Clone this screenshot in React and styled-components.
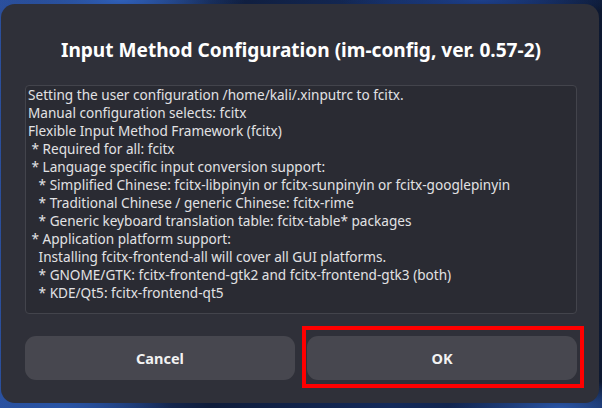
import React from "react";
import styled, { createGlobalStyle } from "styled-components";

const GlobalStyle = createGlobalStyle`
  html, body {
    margin: 0;
    padding: 0;
    width: 602px;
    height: 408px;
    overflow: hidden;
  }
`;

const Screen = styled.div`
  position: relative;
  width: 602px;
  height: 408px;
  box-sizing: border-box;
  padding: 4px 3px 5px 1px;
  display: flex;
  background:
    radial-gradient(ellipse 180px 40px at 120px 0px, #2f5fb8 0%, rgba(47, 95, 184, 0) 70%),
    radial-gradient(ellipse 200px 30px at 480px 0px, #1d3f8a 0%, rgba(29, 63, 138, 0) 70%),
    radial-gradient(ellipse 160px 40px at 60px 408px, #2a56a8 0%, rgba(42, 86, 168, 0) 70%),
    radial-gradient(ellipse 160px 40px at 560px 408px, #2a55a6 0%, rgba(42, 85, 166, 0) 70%),
    linear-gradient(90deg, #2b4f9c 0%, #0f1c3a 35%, #142a5a 65%, #0d1830 100%);
`;

const Dialog = styled.div`
  flex: 1;
  display: flex;
  flex-direction: column;
  background: #2f3039;
  border-radius: 14px;
  padding: 0 22px 23px 24px;
  font-family: "Noto Sans", "Open Sans", sans-serif;
`;

const Header = styled.div`
  height: 81px;
  box-sizing: border-box;
  padding-top: 34px;
  text-align: center;
`;

const Title = styled.h1`
  margin: 0;
  font-size: 19.1px;
  line-height: 24px;
  font-weight: 700;
  color: #ffffff;
  white-space: nowrap;
`;

const LogBox = styled.pre`
  margin: 0;
  height: 229px;
  box-sizing: border-box;
  padding: 0 2px;
  background: #2a2b33;
  border: 1px solid #43444c;
  border-radius: 4px;
  color: #e2e2e4;
  font-family: "Noto Sans", "Open Sans", sans-serif;
  font-size: 13.6px;
  line-height: 18px;
  white-space: pre;
  overflow: hidden;
`;

const Actions = styled.div`
  margin-top: 22px;
  display: grid;
  grid-template-columns: 1fr 1fr;
  gap: 12px;
`;

const Button = styled.button`
  position: relative;
  height: 44px;
  border: none;
  border-radius: 11px;
  background: #47474f;
  color: #f2f2f2;
  font-family: "Noto Sans", "Open Sans", sans-serif;
  font-size: 14.5px;
  font-weight: 700;
  cursor: pointer;
`;

const Highlight = styled.span`
  position: absolute;
  left: -5px;
  right: -7px;
  top: -10px;
  bottom: -8px;
  border: 4px solid #ff0000;
  pointer-events: none;
`;

const lines = [
  "Setting the user configuration /home/kali/.xinputrc to fcitx.",
  "Manual configuration selects: fcitx",
  "Flexible Input Method Framework (fcitx)",
  " * Required for all: fcitx",
  " * Language specific input conversion support:",
  "   * Simplified Chinese: fcitx-libpinyin or fcitx-sunpinyin or fcitx-googlepinyin",
  "   * Traditional Chinese / generic Chinese: fcitx-rime",
  "   * Generic keyboard translation table: fcitx-table* packages",
  " * Application platform support:",
  "   Installing fcitx-frontend-all will cover all GUI platforms.",
  "   * GNOME/GTK: fcitx-frontend-gtk2 and fcitx-frontend-gtk3 (both)",
  "   * KDE/Qt5: fcitx-frontend-qt5",
];

export default function App() {
  return (
    <>
      <GlobalStyle />
      <Screen>
        <Dialog>
          <Header>
            <Title>Input Method Configuration (im-config, ver. 0.57-2)</Title>
          </Header>
          <LogBox>{lines.join("\n")}</LogBox>
          <Actions>
            <Button>Cancel</Button>
            <Button>
              OK
              <Highlight />
            </Button>
          </Actions>
        </Dialog>
      </Screen>
    </>
  );
}
